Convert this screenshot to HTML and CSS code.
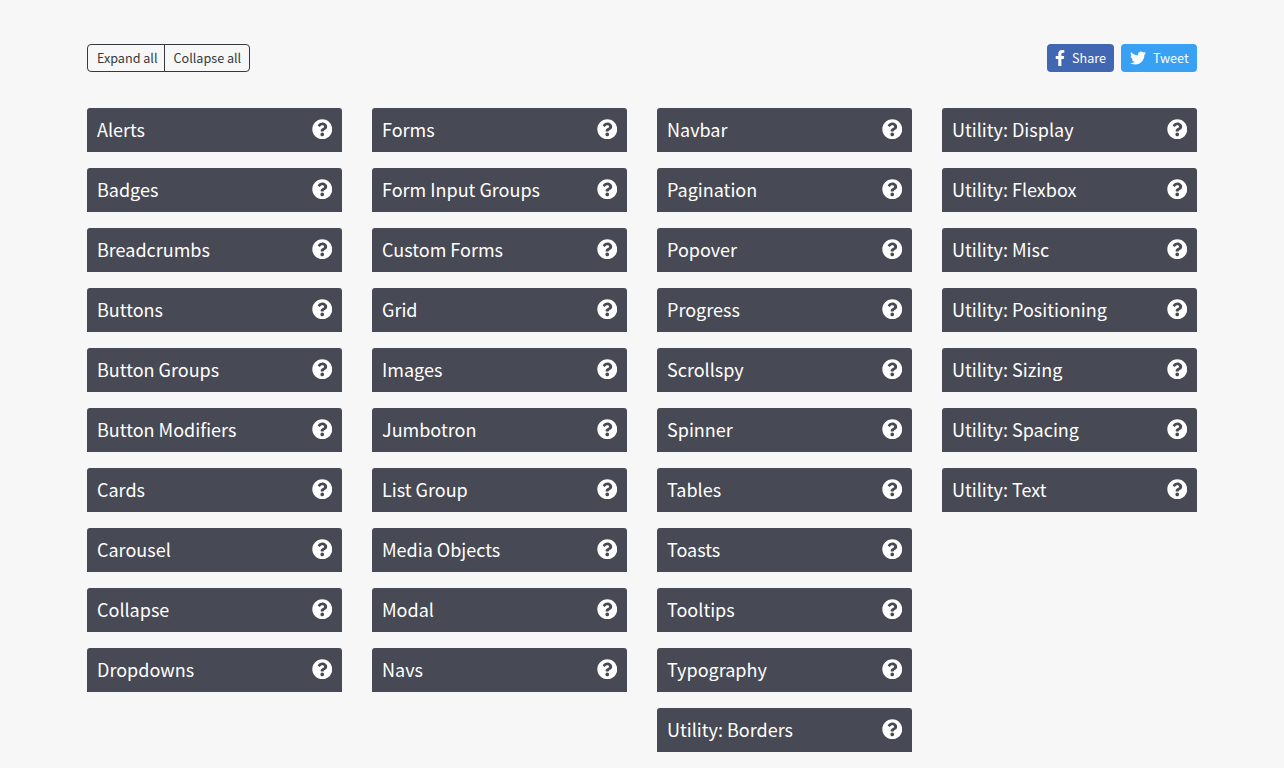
FILE: index.html
```html
<!DOCTYPE html>
<html lang="en">
<head>
<meta charset="utf-8">
<title>Bootstrap Cheatsheet</title>
<link rel="stylesheet" href="styles.css">
</head>
<body>
<svg class="defs" width="0" height="0" aria-hidden="true">
  <symbol id="q" viewBox="0 0 512 512"><path d="M504 256c0 136.997-111.043 248-248 248S8 392.997 8 256C8 119.083 119.043 8 256 8s248 111.083 248 248zM262.655 90c-54.497 0-89.255 22.957-116.549 63.758-3.536 5.286-2.353 12.415 2.715 16.258l34.699 26.31c5.205 3.947 12.621 3.008 16.665-2.122 17.864-22.658 30.113-35.797 57.303-35.797 20.429 0 45.698 13.148 45.698 32.958 0 14.976-12.363 22.667-32.534 33.976C247.128 238.528 216 254.941 216 296v4c0 6.627 5.373 12 12 12h56c6.627 0 12-5.373 12-12v-1.333c0-28.462 83.186-29.647 83.186-106.667 0-58.002-60.165-102-116.531-102zM256 338c-25.365 0-46 20.635-46 46 0 25.364 20.635 46 46 46s46-20.636 46-46c0-25.365-20.635-46-46-46z"/></symbol>
</svg>
<div class="container">
  <header class="toolbar">
    <div class="btn-group">
      <button class="btn">Expand all</button>
      <button class="btn">Collapse all</button>
    </div>
    <div class="social">
      <a class="share fb"><svg class="fb-icon" viewBox="0 0 320 512"><path d="M279.14 288l14.22-92.66h-88.91v-60.13c0-25.35 12.42-50.06 52.24-50.06h40.42V6.26S260.43 0 225.36 0c-73.22 0-121.08 44.38-121.08 124.72v70.62H22.89V288h81.39v224h100.17V288z"/></svg><span>Share</span></a>
      <a class="share tw"><svg class="tw-icon" viewBox="0 0 512 512"><path d="M459.37 151.716c.325 4.548.325 9.097.325 13.645 0 138.72-105.583 298.558-298.558 298.558-59.452 0-114.68-17.219-161.137-47.106 8.447.974 16.568 1.299 25.34 1.299 49.055 0 94.213-16.568 130.274-44.832-46.132-.975-84.792-31.188-98.112-72.772 6.498.974 12.995 1.624 19.818 1.624 9.421 0 18.843-1.3 27.614-3.573-48.081-9.747-84.143-51.98-84.143-102.985v-1.299c13.969 7.797 30.214 12.67 47.431 13.319-28.264-18.843-46.781-51.005-46.781-87.391 0-19.492 5.197-37.36 14.294-52.954 51.655 63.675 129.3 105.258 216.365 109.807-1.624-7.797-2.599-15.918-2.599-24.04 0-57.828 46.782-104.934 104.934-104.934 30.213 0 57.502 12.67 76.67 33.137 23.715-4.548 46.456-13.32 66.599-25.34-7.798 24.366-24.366 44.833-46.132 57.827 21.117-2.273 41.584-8.122 60.426-16.243-14.292 20.791-32.161 39.308-52.628 54.253z"/></svg><span>Tweet</span></a>
    </div>
  </header>
  <main class="columns">
    <section class="column">
      <div class="item"><span>Alerts</span><svg class="help"><use href="#q"/></svg></div>
      <div class="item"><span>Badges</span><svg class="help"><use href="#q"/></svg></div>
      <div class="item"><span>Breadcrumbs</span><svg class="help"><use href="#q"/></svg></div>
      <div class="item"><span>Buttons</span><svg class="help"><use href="#q"/></svg></div>
      <div class="item"><span>Button Groups</span><svg class="help"><use href="#q"/></svg></div>
      <div class="item"><span>Button Modifiers</span><svg class="help"><use href="#q"/></svg></div>
      <div class="item"><span>Cards</span><svg class="help"><use href="#q"/></svg></div>
      <div class="item"><span>Carousel</span><svg class="help"><use href="#q"/></svg></div>
      <div class="item"><span>Collapse</span><svg class="help"><use href="#q"/></svg></div>
      <div class="item"><span>Dropdowns</span><svg class="help"><use href="#q"/></svg></div>
    </section>
    <section class="column">
      <div class="item"><span>Forms</span><svg class="help"><use href="#q"/></svg></div>
      <div class="item"><span>Form Input Groups</span><svg class="help"><use href="#q"/></svg></div>
      <div class="item"><span>Custom Forms</span><svg class="help"><use href="#q"/></svg></div>
      <div class="item"><span>Grid</span><svg class="help"><use href="#q"/></svg></div>
      <div class="item"><span>Images</span><svg class="help"><use href="#q"/></svg></div>
      <div class="item"><span>Jumbotron</span><svg class="help"><use href="#q"/></svg></div>
      <div class="item"><span>List Group</span><svg class="help"><use href="#q"/></svg></div>
      <div class="item"><span>Media Objects</span><svg class="help"><use href="#q"/></svg></div>
      <div class="item"><span>Modal</span><svg class="help"><use href="#q"/></svg></div>
      <div class="item"><span>Navs</span><svg class="help"><use href="#q"/></svg></div>
    </section>
    <section class="column">
      <div class="item"><span>Navbar</span><svg class="help"><use href="#q"/></svg></div>
      <div class="item"><span>Pagination</span><svg class="help"><use href="#q"/></svg></div>
      <div class="item"><span>Popover</span><svg class="help"><use href="#q"/></svg></div>
      <div class="item"><span>Progress</span><svg class="help"><use href="#q"/></svg></div>
      <div class="item"><span>Scrollspy</span><svg class="help"><use href="#q"/></svg></div>
      <div class="item"><span>Spinner</span><svg class="help"><use href="#q"/></svg></div>
      <div class="item"><span>Tables</span><svg class="help"><use href="#q"/></svg></div>
      <div class="item"><span>Toasts</span><svg class="help"><use href="#q"/></svg></div>
      <div class="item"><span>Tooltips</span><svg class="help"><use href="#q"/></svg></div>
      <div class="item"><span>Typography</span><svg class="help"><use href="#q"/></svg></div>
      <div class="item"><span>Utility: Borders</span><svg class="help"><use href="#q"/></svg></div>
    </section>
    <section class="column">
      <div class="item"><span>Utility: Display</span><svg class="help"><use href="#q"/></svg></div>
      <div class="item"><span>Utility: Flexbox</span><svg class="help"><use href="#q"/></svg></div>
      <div class="item"><span>Utility: Misc</span><svg class="help"><use href="#q"/></svg></div>
      <div class="item"><span>Utility: Positioning</span><svg class="help"><use href="#q"/></svg></div>
      <div class="item"><span>Utility: Sizing</span><svg class="help"><use href="#q"/></svg></div>
      <div class="item"><span>Utility: Spacing</span><svg class="help"><use href="#q"/></svg></div>
      <div class="item"><span>Utility: Text</span><svg class="help"><use href="#q"/></svg></div>
    </section>
  </main>
</div>
</body>
</html>
```
FILE: styles.css
```css
* { box-sizing: border-box; }
html, body { margin: 0; height: 768px; overflow: hidden; }
body {
  background: #f7f7f7;
  font-family: "Noto Sans CJK SC", "Noto Sans", sans-serif;
  color: #fff;
}
.defs { display: block; height: 0; }
.container { width: 1110px; margin: 0 auto; padding-top: 44px; }
.toolbar { display: flex; justify-content: space-between; height: 28px; margin-bottom: 36px; }
.btn-group { display: flex; border: 1px solid #343a40; border-radius: 4px; height: 28px; }
.btn {
  background: none; border: 0; padding: 0 8px 0 9px; margin: 0;
  font: 12.6px/26px "Noto Sans CJK SC", sans-serif; color: #343a40;
}
.btn:first-child { padding: 0 6px 0 9px; }
.btn + .btn { border-left: 1px solid #343a40; }
.social { display: flex; gap: 7px; }
.share {
  display: flex; align-items: center; height: 28px; border-radius: 4px;
  font-size: 12.6px; color: #fff;
}
.share span { margin-bottom: 2px; }
.fb { background: #4267b2; width: 67px; padding-left: 8px; }
.tw { background: #38a1f3; width: 76px; padding-left: 9px; }
.fb-icon { width: 10px; height: 16px; fill: #fff; margin-right: 7px; }
.tw-icon { width: 16px; height: 16px; fill: #fff; margin-right: 7px; }
.columns { display: grid; grid-template-columns: repeat(4, 255px); column-gap: 30px; }
.column { display: flex; flex-direction: column; gap: 16px; }
.item {
  display: flex; justify-content: space-between; align-items: center;
  height: 44px; padding: 0 10px;
  background: #474954; border-radius: 3px 3px 0 0;
  font-size: 18px; line-height: 44px;
}
.item span { margin-bottom: 2px; }
.help { width: 20.5px; height: 20.5px; fill: #fff; margin-top: -2px; }
```
